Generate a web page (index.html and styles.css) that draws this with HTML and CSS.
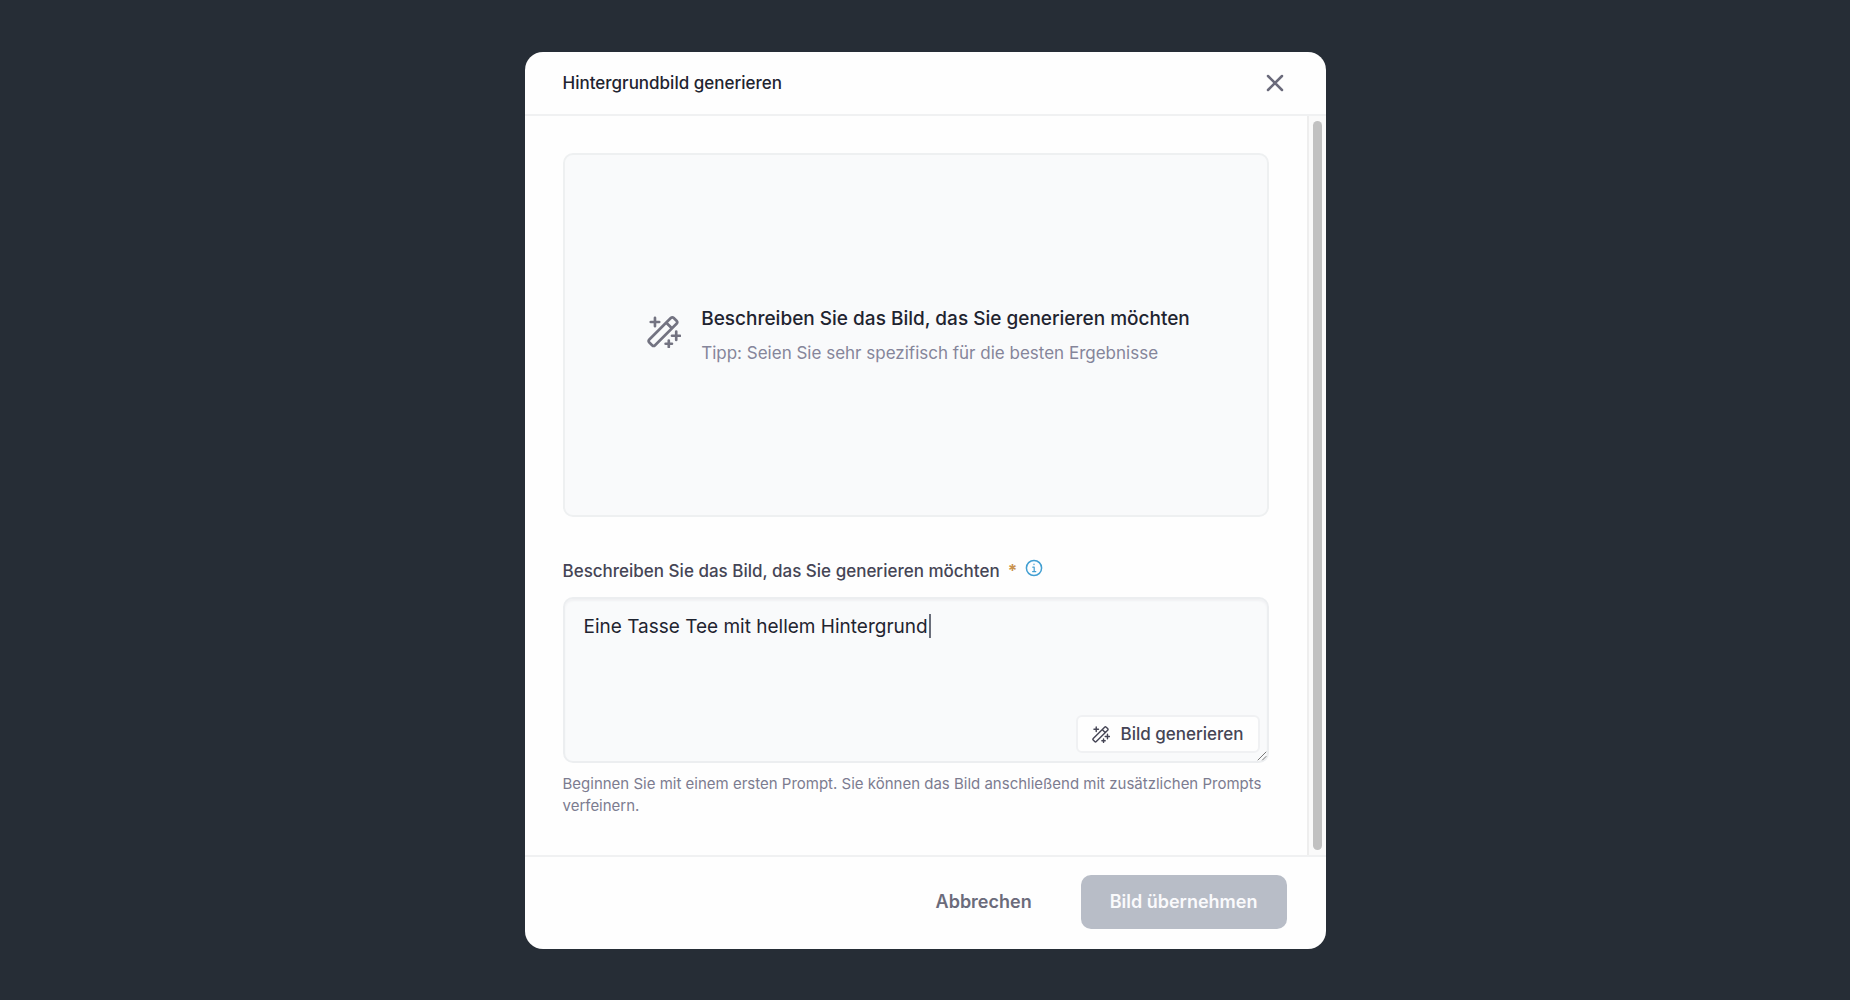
FILE: index.html
```
<!DOCTYPE html>
<html lang="de">

<head>
    <meta charset="UTF-8">
    <title>Hintergrundbild generieren</title>
    <link rel="stylesheet" href="styles.css">
</head>

<body>
    <svg class="sprite" aria-hidden="true">
        <symbol id="wand" viewBox="0 0 32 32">
            <path d="M2.2 24 L22.4 3.8 a2 2 0 0 1 2.8 0 L27.8 6.4 a2 2 0 0 1 0 2.8 L7.6 29.4 a2 2 0 0 1 -2.8 0 L2.2 26.8 a2 2 0 0 1 0 -2.8 Z M18.2 8.2 L23.4 13.4" />
            <path d="M7.5 3.5 V11.5 M3.5 7.5 H11.5 M27.5 16.5 V24.5 M23.5 20.5 H31 M20.5 25 V31 M17.5 28 H23.5" />
        </symbol>
    </svg>
    <div class="modal" role="dialog" aria-labelledby="title">
        <header class="modal-header">
            <h1 id="title">Hintergrundbild generieren</h1>
            <button class="close" type="button" aria-label="Schließen">
                <svg viewBox="0 0 18 18">
                    <path d="M2 2 L16 16 M16 2 L2 16" />
                </svg>
            </button>
        </header>
        <div class="modal-body">
            <form class="content" id="promptForm">
                <div class="preview">
                    <svg class="preview-icon">
                        <use href="#wand" />
                    </svg>
                    <div>
                        <h2>Beschreiben Sie das Bild, das Sie generieren möchten</h2>
                        <p>Tipp: Seien Sie sehr spezifisch für die besten Ergebnisse</p>
                    </div>
                </div>
                <div class="label-row">
                    <label for="prompt">Beschreiben Sie das Bild, das Sie generieren möchten</label>
                    <span class="required">*</span>
                    <svg class="info" viewBox="0 0 18 18">
                        <circle cx="9" cy="9" r="7.6" />
                        <path class="info-i" d="M7.8 8.2 H9.2 V12.6 M7.6 12.6 H10.8 M9 5 V5.6" />
                    </svg>
                </div>
                <div class="prompt-box">
                    <textarea id="prompt" spellcheck="false">Eine Tasse Tee mit hellem Hintergrund</textarea>
                    <span class="caret"></span>
                    <button class="generate" type="button">
                        <svg>
                            <use href="#wand" />
                        </svg>
                        Bild generieren
                    </button>
                    <svg class="grip" viewBox="0 0 10 10">
                        <path d="M1 9 L9 1 M5.5 9 L9 5.5" />
                    </svg>
                </div>
                <p class="help">Beginnen Sie mit einem ersten Prompt. Sie können das Bild anschließend mit zusätzlichen Prompts verfeinern.</p>
            </form>
            <div class="scroll-track">
                <div class="scroll-thumb"></div>
            </div>
        </div>
        <footer class="modal-footer">
            <button class="cancel" type="button">Abbrechen</button>
            <button class="submit" type="submit" form="promptForm" disabled>Bild übernehmen</button>
        </footer>
    </div>
</body>

</html>
```
FILE: styles.css
```
* {
    box-sizing: border-box;
}

body {
    margin: 0;
    min-height: 100vh;
    display: flex;
    align-items: center;
    justify-content: center;
    background-color: #262d36;
    font-family: Inter, "Liberation Sans", sans-serif;
    color: #1f2430;
}

h1,
h2,
p {
    margin: 0;
}

button,
textarea {
    font-family: inherit;
}

svg {
    fill: none;
    stroke: currentColor;
    stroke-linecap: round;
    stroke-linejoin: round;
    flex-shrink: 0;
}

.sprite {
    position: absolute;
    width: 0;
    height: 0;
}

.modal {
    width: 100%;
    max-width: 801px;
    background-color: #fefefe;
    border-radius: 18px;
    overflow: hidden;
}

.modal-header {
    display: flex;
    align-items: center;
    justify-content: space-between;
    height: 64px;
    padding: 0 40px 0 38px;
    border-bottom: 2px solid #f0f1f2;
}

h1 {
    font-size: 17px;
    font-weight: 500;
}

.close {
    display: flex;
    padding: 2px;
    border: none;
    background: none;
    color: #6b6b7b;
    cursor: pointer;
}

.close svg {
    width: 18px;
    height: 18px;
    stroke-width: 2.5;
}

.modal-body {
    display: flex;
}

.content {
    flex: 1;
    padding: 37px 38px 38px;
}

.preview {
    display: flex;
    align-items: center;
    justify-content: center;
    gap: 20px;
    height: 364px;
    padding-left: 6px;
    border: 2px solid #eef0f1;
    border-radius: 10px;
    background-color: #f9fafb;
}

.preview-icon {
    width: 34px;
    height: 34px;
    margin-bottom: 8px;
    color: #737381;
    stroke-width: 2.5;
}

h2 {
    font-size: 19px;
    font-weight: 500;
    line-height: 32px;
}

.preview p {
    padding-top: 4px;
    font-size: 17px;
    line-height: 28px;
    color: #85859a;
}

.label-row {
    display: flex;
    align-items: center;
    gap: 8px;
    margin: 40px 0 12px;
    height: 28px;
    font-size: 17px;
    font-weight: 500;
    color: #454555;
}

.required {
    font-weight: 700;
    color: #c9924f;
}

.info {
    width: 18px;
    height: 18px;
    margin-bottom: 6px;
    color: #429fd2;
    stroke-width: 1.5;
}

.info-i {
    stroke-width: 1.2;
}

.prompt-box {
    position: relative;
    display: flex;
}

textarea {
    width: 100%;
    height: 166px;
    padding: 12px 19px;
    border: 2px solid #eceef0;
    border-radius: 10px;
    background-color: #f9fafb;
    box-shadow: inset 0 2px 2px #f0f1f3;
    font-size: 19px;
    line-height: 32px;
    color: #1f2430;
    resize: none;
    outline: none;
}

.caret {
    position: absolute;
    top: 17px;
    left: 366px;
    width: 2px;
    height: 24px;
    background-color: #6a6e7a;
}

.generate {
    position: absolute;
    right: 9px;
    bottom: 10px;
    display: flex;
    align-items: center;
    gap: 10px;
    height: 38px;
    padding: 0 14px;
    border: 2px solid #f0f1f3;
    border-radius: 6px;
    background-color: #fefefe;
    font-size: 17px;
    font-weight: 500;
    color: #454555;
    cursor: pointer;
}

.generate svg {
    width: 18px;
    height: 18px;
    stroke-width: 2.5;
}

.grip {
    position: absolute;
    right: 2px;
    bottom: 2px;
    width: 10px;
    height: 10px;
    color: #777;
}

.help {
    padding-top: 10px;
    font-size: 15px;
    line-height: 22px;
    color: #7c7c90;
}

.scroll-track {
    display: flex;
    width: 19px;
    padding: 5px 4px;
    border-left: 2px solid #eeeeee;
    background-color: #fafafa;
}

.scroll-thumb {
    flex: 1;
    border-radius: 6px;
    background-color: #c1c1c1;
}

.modal-footer {
    display: flex;
    align-items: center;
    justify-content: flex-end;
    gap: 20px;
    padding: 18px 39px 20px;
    border-top: 2px solid #f0f1f2;
}

.modal-footer button {
    height: 54px;
    padding: 0 29px;
    border: none;
    border-radius: 10px;
    font-size: 18px;
    font-weight: 600;
}

.cancel {
    background: none;
    color: #6b6b7b;
    cursor: pointer;
}

.submit {
    background-color: #b8bdc7;
    color: #fafafc;
}
```
